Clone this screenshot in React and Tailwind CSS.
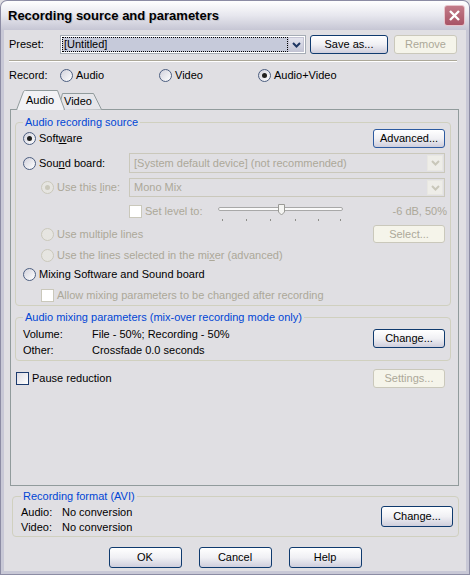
import React from 'react'

const dis = 'text-[#aca899]'

function Radio({ checked, disabled }) {
  return (
    <span
      className={`w-[13px] h-[13px] shrink-0 rounded-full border flex items-center justify-center ${
        disabled ? 'border-[#cac8bb] bg-[#e6e5e1]' : 'border-[#4c5e80] bg-gradient-to-br from-[#d2d2dc] to-white'
      }`}
    >
      {checked && <span className={`w-[5px] h-[5px] rounded-full ${disabled ? 'bg-[#cac8bb]' : 'bg-[#21211f]'}`} />}
    </span>
  )
}

function Check({ disabled }) {
  return (
    <span
      className={`w-[13px] h-[13px] shrink-0 border ${
        disabled ? 'border-[#cac8bb] bg-white' : 'border-[#1c3b6e] bg-gradient-to-br from-[#dcdce4] to-white'
      }`}
    />
  )
}

function Btn({ children, disabled, className = '' }) {
  return (
    <div
      className={`flex items-center justify-center rounded-[3px] border shrink-0 ${
        disabled
          ? 'border-[#cac8bb] bg-[#f5f4ea] text-[#aca899]'
          : 'border-[#0f3a6e] bg-gradient-to-b from-white via-[#f0f0f4] to-[#cfcedc] text-black'
      } ${className}`}
    >
      {children}
    </div>
  )
}

function Chevron({ color }) {
  return (
    <svg width="9" height="6" viewBox="0 0 9 6">
      <path d="M1 1 L4.5 4.5 L8 1" fill="none" stroke={color} strokeWidth="2" />
    </svg>
  )
}

function Combo({ text, disabled, focused, className = '' }) {
  return (
    <div
      className={`flex border p-[1px] ${disabled ? 'border-[#cac8bb] bg-[#e0dfe3]' : 'border-[#a5acb5] bg-white'} ${className}`}
    >
      <div className="flex-1 flex items-center min-w-0">
        {focused ? (
          <div className="flex-1 h-full flex items-center bg-[#c6cada] border border-dotted border-black px-[1px]">
            {text}
          </div>
        ) : (
          <span className={`px-[3px] ${disabled ? dis : ''}`}>{text}</span>
        )}
      </div>
      <div
        className={`w-[16px] flex items-center justify-center border ${
          disabled ? 'border-[#e8e7e2] bg-[#eeede8]' : 'border-[#c3c3d3] bg-gradient-to-b from-[#e4e4ee] to-[#c4c6d6]'
        }`}
      >
        <Chevron color={disabled ? '#c9c7ba' : '#1e3663'} />
      </div>
    </div>
  )
}

function Group({ title, className = '', children }) {
  return (
    <fieldset className={`border border-[#d0d0bf] rounded-[4px] ${className}`}>
      <legend className="px-[2px] leading-[13px] text-[#0046d5]">{title}</legend>
      {children}
    </fieldset>
  )
}

export default function App() {
  return (
    <div className="w-[470px] h-[575px] flex flex-col overflow-hidden bg-[#e0dfe3] font-['Liberation_Sans',Arial,sans-serif] text-[11px] text-black leading-[13px]">
      <div className="h-[30px] shrink-0 flex items-center pl-[7px] pr-[4px] rounded-t-[7px] border border-b-0 border-[#8c8ca4] bg-gradient-to-b from-[#ffffff] via-[#e7e7ee] to-[#c6c6d4]">
        <span className="flex-1 text-[13px] font-bold [text-shadow:1px_1px_0_#c4c4cc]">Recording source and parameters</span>
        <div className="w-[21px] h-[21px] rounded-[3px] border border-[#e8c4cb] bg-gradient-to-b from-[#c27a88] to-[#a85466] flex items-center justify-center">
          <svg width="13" height="13" viewBox="0 0 13 13">
            <path d="M2 2 L11 11 M11 2 L2 11" stroke="white" strokeWidth="2.4" />
          </svg>
        </div>
      </div>

      <div className="flex-1 flex flex-col border border-t-0 border-[#8c8ca4]">
        <div className="flex-1 flex flex-col border-x-[3px] border-b-[3px] border-[#c8c8d6] bg-[#e0dfe3]">
          {/* Preset */}
          <div className="flex items-center h-[19px] mt-[5px] pl-[5px]">
            <span className="w-[51px]">Preset:</span>
            <Combo focused text="[Untitled]" className="w-[246px] h-[19px]" />
            <Btn className="ml-[4px] w-[78px] h-[19px]">Save as...</Btn>
            <Btn disabled className="ml-[6px] w-[63px] h-[19px]">Remove</Btn>
          </div>
          <div className="mt-[6px] ml-[5px] w-[448px] border-t border-[#aca899] border-b border-b-white" />

          {/* Record */}
          <div className="flex items-center h-[14px] mt-[6px] pl-[5px]">
            <span className="w-[51px]">Record:</span>
            <div className="w-[99px] flex items-center">
              <Radio />
              <span className="ml-[3px]">Audio</span>
            </div>
            <div className="w-[99px] flex items-center">
              <Radio />
              <span className="ml-[3px]">Video</span>
            </div>
            <div className="flex items-center">
              <Radio checked />
              <span className="ml-[3px]">Audio+Video</span>
            </div>
          </div>

          {/* Tabs */}
          <div className="relative z-10 flex h-[19px] mt-[8px] ml-[12px] w-[90px]">
            <svg className="absolute left-0 top-0" width="90" height="20" viewBox="0 0 90 20">
              <path d="M42 20 L46.5 3.5 L77.5 3.5 L85.5 19.5" fill="#e6e6ea" stroke="#919b9c" />
              <path d="M0.5 20 L7.5 1.5 Q8 0.5 9.5 0.5 L41.5 0.5 L48.5 19.5 L48.5 20 Z" fill="#f2f2f5" stroke="#919b9c" />
              <path d="M1.5 20 L47.5 20" stroke="#f2f2f5" strokeWidth="2" />
            </svg>
            <span className="relative w-[48px] pl-[10px] pt-[4px]">Audio</span>
            <span className="relative pt-[5px]">Video</span>
          </div>

          {/* Panel */}
          <div className="ml-[6px] w-[449px] h-[377px] border border-[#919b9c] flex flex-col">
            <Group title="Audio recording source" className="mt-[6px] ml-[4px] mr-[7px] pl-[7px] pr-[5px] pb-[1px]">
              <div className="flex items-center h-[19px]">
                <Radio checked />
                <span className="ml-[3px]">
                  Soft<u>w</u>are
                </span>
                <div className="flex-1" />
                <Btn className="w-[72px] h-[19px] border-[#2c5aa0]">Advanced...</Btn>
              </div>
              <div className="flex items-center h-[20px] mt-[5px]">
                <div className="w-[106px] flex items-center">
                  <Radio />
                  <span className="ml-[3px]">
                    Sou<u>n</u>d board:
                  </span>
                </div>
                <Combo disabled text="[System default device] (not recommended)" className="flex-1 h-[20px]" />
              </div>
              <div className="flex items-center h-[19px] mt-[5px] pl-[18px]">
                <div className="w-[88px] flex items-center">
                  <Radio checked disabled />
                  <span className={`ml-[3px] ${dis}`}>
                    Use this <u>l</u>ine:
                  </span>
                </div>
                <Combo disabled text="Mono Mix" className="flex-1 h-[19px]" />
              </div>
              <div className="flex items-center h-[22px] mt-[3px]">
                <div className="w-[106px]" />
                <div className="w-[89px] flex items-center">
                  <Check disabled />
                  <span className={`ml-[3px] ${dis}`}>Set level to:</span>
                </div>
                <svg width="128" height="22" viewBox="0 0 128 22" className="shrink-0">
                  <rect x="0.5" y="7.5" width="124" height="3" rx="1.5" fill="#fafafa" stroke="#a8a8a8" />
                  <path d="M60.5 4.5 H66.5 V12 L63.5 15 L60.5 12 Z" fill="#f4f4f2" stroke="#9a9a96" />
                  {[4, 28, 52, 77, 100, 122].map((x) => (
                    <rect key={x} x={x} y="19" width="1" height="2" fill="#8e8e8a" />
                  ))}
                </svg>
                <span className={`flex-1 text-right -mr-[2px] ${dis}`}>-6 dB, 50%</span>
              </div>
              <div className="flex items-center h-[18px] mt-[3px] pl-[18px]">
                <Radio disabled />
                <span className={`ml-[3px] flex-1 ${dis}`}>Use multiple lines</span>
                <Btn disabled className="w-[72px] h-[18px]">Select...</Btn>
              </div>
              <div className="flex items-center h-[18px] mt-[3px] pl-[18px]">
                <Radio disabled />
                <span className={`ml-[3px] ${dis}`}>
                  Use the lines selected in the mi<u>x</u>er (advanced)
                </span>
              </div>
              <div className="flex items-center h-[18px] mt-[1px]">
                <Radio />
                <span className="ml-[3px]">Mixing Software and Sound board</span>
              </div>
              <div className="flex items-center h-[18px] mt-[3px] pl-[18px]">
                <Check disabled />
                <span className={`ml-[3px] ${dis}`}>Allow mixing parameters to be changed after recording</span>
              </div>
            </Group>

            <Group title="Audio mixing parameters (mix-over recording mode only)" className="mt-[5px] ml-[4px] mr-[7px] pl-[7px] pr-[5px] pb-[2px]">
              <div className="flex">
                <div className="flex-1 pt-[2px]">
                  <div className="flex h-[16px] items-center">
                    <span className="w-[69px]">Volume:</span>
                    <span>File - 50%; Recording - 50%</span>
                  </div>
                  <div className="flex h-[16px] items-center">
                    <span className="w-[69px]">Other:</span>
                    <span>Crossfade 0.0 seconds</span>
                  </div>
                </div>
                <Btn className="mt-[5px] w-[72px] h-[19px]">Change...</Btn>
              </div>
            </Group>

            <div className="flex items-center h-[19px] mt-[8px] ml-[5px] mr-[13px]">
              <Check />
              <span className="ml-[3px] flex-1">Pause reduction</span>
              <Btn disabled className="w-[72px] h-[19px]">Settings...</Btn>
            </div>
          </div>

          {/* Recording format */}
          <Group title="Recording format (AVI)" className="mt-[4px] ml-[8px] w-[447px] pl-[8px] pr-[5px] pb-[1px]">
            <div className="flex">
              <div className="flex-1 pt-[2px]">
                <div className="flex h-[15px] items-center">
                  <span className="w-[41px]">Audio:</span>
                  <span>No conversion</span>
                </div>
                <div className="flex h-[15px] items-center">
                  <span className="w-[41px]">Video:</span>
                  <span>No conversion</span>
                </div>
              </div>
              <Btn className="mt-[3px] w-[72px] h-[21px]">Change...</Btn>
            </div>
          </Group>

          {/* Footer buttons */}
          <div className="flex justify-center gap-[17px] mt-[10px]">
            <Btn className="w-[73px] h-[21px]">OK</Btn>
            <Btn className="w-[73px] h-[21px]">Cancel</Btn>
            <Btn className="w-[73px] h-[21px]">Help</Btn>
          </div>
        </div>
      </div>
    </div>
  )
}
